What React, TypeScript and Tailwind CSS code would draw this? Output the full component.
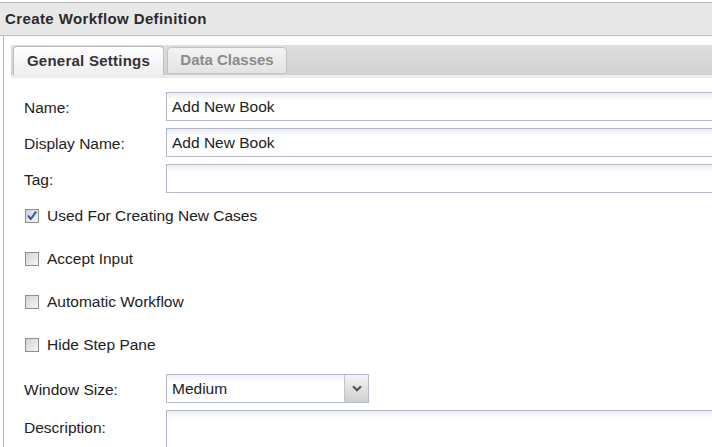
const font = "font-['Liberation_Sans',Arial,sans-serif]";

const inputCls =
  "h-[29px] border border-[#b5b8c8] bg-[linear-gradient(#e8ecf0,#ffffff_7px)] px-[5px] pt-[1px] flex items-center text-[15.5px] text-[#222]";

function Check({ checked }: { checked?: boolean }) {
  return (
    <span className="relative flex h-[14px] w-[14px] shrink-0 items-center justify-center border border-[#8e8e8e] bg-[linear-gradient(135deg,#d2d2d2,#f7f7f7)]">
      {checked && (
        <svg width="12" height="12" viewBox="0 0 12 12" className="absolute">
          <path d="M2.5 6.2 L4.8 9 L9.8 2.2" fill="none" stroke="#2f58a6" strokeWidth="2" strokeLinecap="round" strokeLinejoin="round" />
        </svg>
      )}
    </span>
  );
}

const Row = ({ label, value }: { label: string; value?: string }) => (
  <div className="flex items-center">
    <span className="w-[142px] shrink-0 pt-[2px] text-[15.5px] text-[#222]">{label}</span>
    <div className={`${inputCls} w-[560px] shrink-0`}>{value}</div>
  </div>
);

const CheckRow = ({ label, checked }: { label: string; checked?: boolean }) => (
  <div className="flex h-[43px] items-center pl-[1px]">
    <Check checked={checked} />
    <span className="ml-[8px] pt-[1px] text-[15.5px] text-[#222]">{label}</span>
  </div>
);

export default function App() {
  return (
    <div className={`h-[447px] w-[712px] overflow-hidden bg-white ${font}`}>
      {/* Window header */}
      <div className="mt-[2px] flex h-[34px] items-center border-t border-b border-t-[#b9b9b9] border-b-[#c6b9b9] bg-[#e8e8e8] pl-[5px] text-[15px] font-bold tracking-[0.4px] text-[#2b2b2b]">
        Create Workflow Definition
      </div>

      <div className="ml-[3px] h-full border-l border-[#b4b4b4] pl-[7px] pt-[9px]">
        {/* Tab strip */}
        <div className="flex h-[30px] items-end gap-[3px] bg-[linear-gradient(#dedede,#d1d1d1)] pl-[2px]">
          <div className="flex h-[29px] w-[151px] items-center justify-center rounded-t-[4px] border border-b-0 border-[#bcbcbc] bg-[linear-gradient(#ffffff,#eeeeee)] text-[15px] font-bold tracking-[0.25px] text-[#333]">
            General Settings
          </div>
          <div className="mb-[1px] flex h-[27px] w-[120px] items-center justify-center rounded-t-[4px] border border-[#c2c2c2] bg-[linear-gradient(#f3f3f3,#e3e3e3)] text-[15px] font-bold text-[#8a8a8a]">
            Data Classes
          </div>
        </div>
        <div className="h-[3px] bg-[#ececec]" />

        {/* Form */}
        <div className="flex flex-col pl-[13px] pt-[14px]">
          <div className="flex flex-col gap-[7px]">
            <Row label="Name:" value="Add New Book" />
            <Row label="Display Name:" value="Add New Book" />
            <Row label="Tag:" />
          </div>

          <div className="mt-[1px] flex flex-col">
            <CheckRow label="Used For Creating New Cases" checked />
            <CheckRow label="Accept Input" />
            <CheckRow label="Automatic Workflow" />
            <CheckRow label="Hide Step Pane" />
          </div>

          <div className="mt-[8px] flex items-center">
            <span className="w-[142px] shrink-0 pt-[2px] text-[15.5px] text-[#222]">Window Size:</span>
            <div className="flex h-[29px] w-[203px] border border-[#b5b8c8]">
              <div className="flex flex-1 items-center bg-[linear-gradient(#eef1f4,#ffffff_7px)] px-[5px] pt-[1px] text-[15.5px] text-[#222]">
                Medium
              </div>
              <div className="flex w-[24px] items-center justify-center border-l border-[#c4c4c4] bg-[linear-gradient(#f4f4f4,#cfcfcf)]">
                <svg width="10" height="7" viewBox="0 0 10 7">
                  <path d="M1 1.2 L5 5.2 L9 1.2" fill="none" stroke="#555" strokeWidth="2.2" />
                </svg>
              </div>
            </div>
          </div>

          <div className="mt-[7px] flex items-start">
            <span className="w-[142px] shrink-0 pt-[6px] text-[15.5px] text-[#222]">Description:</span>
            <div className="h-[60px] w-[560px] shrink-0 border border-[#b5b8c8] bg-[linear-gradient(#e8ecf0,#ffffff_7px)]" />
          </div>
        </div>
      </div>
    </div>
  );
}
